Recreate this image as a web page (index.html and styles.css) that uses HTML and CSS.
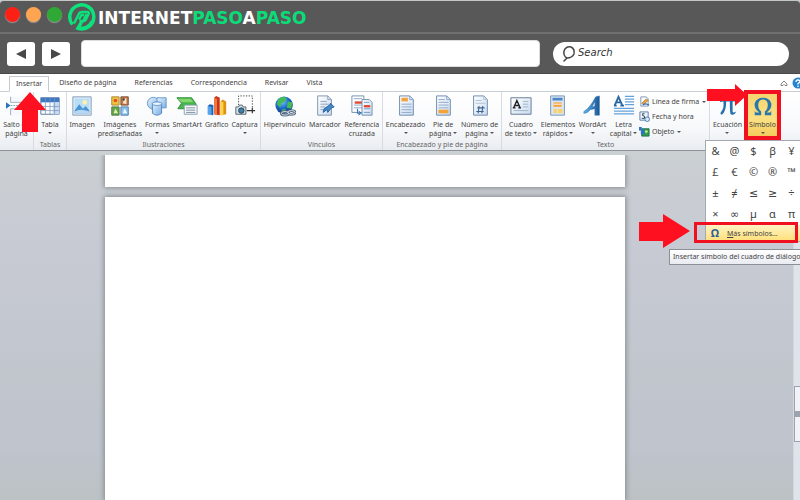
FILE: index.html
```html
<!DOCTYPE html>
<html lang="es">
<head>
<meta charset="utf-8">
<title>Insertar símbolo</title>
<link rel="stylesheet" href="styles.css">
</head>
<body>
<svg class="defs" width="0" height="0" aria-hidden="true">
  <defs>
    <linearGradient id="blue" x1="0" y1="0" x2="1" y2="1"><stop offset="0" stop-color="#e8f3fd"/><stop offset="1" stop-color="#79aee4"/></linearGradient>
    <linearGradient id="deep" x1="0" y1="0" x2="1" y2="0"><stop offset="0" stop-color="#5fb4ea"/><stop offset="1" stop-color="#1b5796"/></linearGradient>
    <linearGradient id="sheet" x1="0" y1="0" x2="1" y2="1"><stop offset="0" stop-color="#ffffff"/><stop offset="1" stop-color="#c9dcf2"/></linearGradient>
    <radialGradient id="globe" cx=".4" cy=".3" r=".7"><stop offset="0" stop-color="#7ec8ff"/><stop offset=".5" stop-color="#1f6fd0"/><stop offset="1" stop-color="#0b3580"/></radialGradient>
  </defs>
</svg>

<header class="browser">
  <div class="titlebar">
    <span class="dot red"></span><span class="dot orange"></span><span class="dot green"></span>
    <svg class="logo" viewBox="0 0 28 28" aria-hidden="true">
      <path d="M4.500 21.500A12 12 0 1 1 10 25.300L13.500 19" fill="none" stroke="#0be27c" stroke-width="3.500"/>
      <path d="M6 20.500L11 10.500Q12 9 14 9H19.500Q21.500 9 20.600 11L18 16.500Q17.300 18 15.500 18H11.500M14.500 19.500L18.500 11M11 16.500L13.500 12H16" fill="none" stroke="#0be27c" stroke-width="2.400"/>
      <path d="M12 24.500Q20 25.500 23.500 18" fill="none" stroke="#0be27c" stroke-width="2"/>
    </svg>
    <span class="brand">INTERNET<span>PASO</span>A<span>PASO</span></span>
  </div>
  <div class="navbar">
    <button class="nav" aria-label="Atrás"><svg viewBox="0 0 12 12"><path d="M11 1V11L1 6Z" fill="#484848"/></svg></button>
    <button class="nav" aria-label="Adelante"><svg viewBox="0 0 12 12"><path d="M1 1V11L11 6Z" fill="#484848"/></svg></button>
    <input class="address" type="text" aria-label="Dirección">
    <label class="search">
      <svg viewBox="0 0 16 18"><path d="M6 13Q2 11 3 6Q5 1 10 2Q14 4 13 9Q11 13 6 13L3 16" fill="none" stroke="#444" stroke-width="1.500" stroke-linecap="round"/></svg>
      <input type="text" placeholder="Search" aria-label="Search">
    </label>
  </div>
</header>

<nav class="tabs">
  <button class="tab active">Insertar
    <svg class="arrow up" viewBox="0 0 32 40"><path d="M16 0L32 18H24V40H8V18H0Z"/></svg>
  </button>
  <button class="tab">Diseño de página</button>
  <button class="tab">Referencias</button>
  <button class="tab">Correspondencia</button>
  <button class="tab">Revisar</button>
  <button class="tab">Vista</button>
  <span class="tools">
    <svg viewBox="0 0 8 8"><path d="M1 5L4 2L7 5V6.500H5L4 5.500L3 6.500H1Z" fill="#fff" stroke="#666" stroke-width=".8"/></svg>
    <svg class="help" viewBox="0 0 12 12"><circle cx="6" cy="6" r="5.500" fill="#2583cf"/><path d="M4 5Q4 3 6 3Q8 3 8 4.600Q8 5.500 6 6.500V7.500M6 8.500V10" fill="none" stroke="#fff" stroke-width="1.300"/></svg>
  </span>
</nav>

<section class="ribbon">
  <div class="group pages">
    <div class="items">
      <button class="cmd"><svg viewBox="0 0 24 24"><path d="M5 2V8H23V2M5 22V15H23V22" fill="#f5f8fc" stroke="#9aaabd"/><path d="M5 11.500H23" stroke="#7b98ba" stroke-dasharray="2 1"/><path d="M0 8L5 11.500L0 15Z" fill="#2675be"/></svg><span>Salto de<br>página</span></button>
    </div>
    <h2></h2>
  </div>
  <div class="group tables">
    <div class="items">
      <button class="cmd"><svg viewBox="0 0 24 24"><path d="M2 3H22V21H2Z" fill="#fff" stroke="#55749c"/><path d="M2 3H22V8H2Z" fill="#3f78c4"/><path d="M15 8H22V21H15Z" fill="#c7dbf3"/><path d="M2 12.500H22M2 17H22M7 3V21M12 3V21M17 3V21" stroke="#7896bb" stroke-width=".8"/></svg><span>Tabla<i class="drop"></i></span></button>
    </div>
    <h2>Tablas</h2>
  </div>
  <div class="group pictures">
    <div class="items">
      <button class="cmd"><svg viewBox="0 0 24 24"><path d="M2 2H22V22H2Z" fill="#dcebf8" stroke="#8199b4"/><path d="M4 4H20V20H4Z" fill="#b9ddf7"/><circle cx="15" cy="8" r="2.500" fill="#fff2a8"/><path d="M4 17L9 10L13 15L16 12L20 17V20H4Z" fill="#4c94d4"/><path d="M4 18Q10 14 20 18V20H4Z" fill="#b6d7ef"/></svg><span>Imagen</span></button>
      <button class="cmd"><svg viewBox="0 0 24 24"><path d="M3 2H11V11H3Z" fill="#f3c33b" stroke="#a48432"/><circle cx="7" cy="6" r="2" fill="#e14d28"/><path d="M13 2H21V11H13Z" fill="#cd7745" stroke="#73472e"/><path d="M15 9L16 5L19 3L19 10Z" fill="#f2e4c5"/><circle cx="16" cy="5" r="1.200" fill="#244"/><path d="M3 13H11V22H3Z" fill="#67a64d" stroke="#467744"/><path d="M5 20L7 15L10 20Z" fill="#e1f0ae"/><path d="M13 13H21V22H13Z" fill="#91c4ed" stroke="#4479aa"/><path d="M15 20L17 15L20 20Z" fill="#edf8ff"/></svg><span>Imágenes<br>prediseñadas</span></button>
      <button class="cmd"><svg viewBox="0 0 24 24"><circle cx="8" cy="9" r="6.500" fill="url(#blue)" stroke="#6798ca"/><path d="M12 3H22V14H12Z" fill="url(#blue)" stroke="#6798ca"/><path d="M7 9Q12 6 17 9V20Q12 24 7 20Z" fill="url(#blue)" stroke="#4e84bf"/><ellipse cx="12" cy="9.500" rx="5" ry="2" fill="#e8f5ff" stroke="#6798ca"/></svg><span>Formas<i class="drop"></i></span></button>
      <button class="cmd"><svg viewBox="0 0 24 24"><path d="M1 3H17L22 10L20 15H2L6 9Z" fill="#45b649" stroke="#278d37"/><path d="M2 4H16L19 8H6Z" fill="#86d66f"/><path d="M9 11H23V21H9Z" fill="#f5f9fc" stroke="#849bae"/><path d="M11 14H21M11 16.500H21M11 19H21" stroke="#789"/></svg><span>SmartArt</span></button>
      <button class="cmd"><svg viewBox="0 0 24 24"><path d="M2 12L4 10L8 11V22L2 21Z" fill="#1b64bc"/><path d="M2 12L6 13V22L2 21Z" fill="#56a5e8"/><path d="M9 3L11 1L15 3V22L9 21Z" fill="#c6351b"/><path d="M9 3L12 4V22L9 21Z" fill="#f37938"/><path d="M16 7L18 5L22 7V21L16 22Z" fill="#dd9212"/><path d="M16 7L19 8V22H16Z" fill="#ffd33e"/></svg><span>Gráfico</span></button>
      <button class="cmd"><svg viewBox="0 0 24 24"><path d="M5 11V1H20V14" fill="none" stroke="#444" stroke-dasharray="1.500 1.500"/><path d="M2 13H5L6 11H9L10 13H13V21H2Z" fill="#d8e2e9" stroke="#52606b"/><circle cx="8" cy="17" r="3" fill="#417fa7" stroke="#233e54"/><path d="M14 17H23M20 14V20" stroke="#333" stroke-width="1.300"/></svg><span>Captura<i class="drop"></i></span></button>
    </div>
    <h2>Ilustraciones</h2>
  </div>
  <div class="group links">
    <div class="items">
      <button class="cmd"><svg viewBox="0 0 24 24"><circle cx="11" cy="11" r="9.500" fill="url(#globe)"/><path d="M5 4Q11 0 14 4L11 8L8 9L7 14L3 10ZM15 7L20 8L19 15L14 14ZM8 16L13 15L11 20Z" fill="#45bb58"/><g fill="none" stroke="#52677d" stroke-width="3"><ellipse cx="12" cy="20" rx="4" ry="2"/><ellipse cx="19" cy="19" rx="4" ry="2"/></g><g fill="none" stroke="#dce7ef" stroke-width="1"><ellipse cx="12" cy="20" rx="4" ry="2"/><ellipse cx="19" cy="19" rx="4" ry="2"/></g></svg><span>Hipervínculo</span></button>
      <button class="cmd"><svg viewBox="0 0 24 24"><path d="M4 1H15L19 5V22H4Z" fill="url(#sheet)" stroke="#7c91a9"/><path d="M15 1V5H19M7 7H14M7 10H16M7 13H12M7 16H12" fill="none" stroke="#8c9db2"/><path d="M11 15L17 11L18 9L22 13L19 14L15 19L14 16L10 19Z" fill="#4189cb" stroke="#255c98"/></svg><span>Marcador</span></button>
      <button class="cmd"><svg viewBox="0 0 24 24"><path d="M1 1H14V19H1Z" fill="#fff" stroke="#6f8bab"/><path d="M3 4H12M3 11H12M3 14H12" stroke="#87a4c8"/><path d="M4 7H12V9.500H4Z" fill="#de4631"/><path d="M12 5H20L23 8V22H12Z" fill="url(#sheet)" stroke="#6f8bab"/><path d="M14 8H20M14 15H21M14 19H21" stroke="#6f99cc"/><path d="M14 11H21V13.500H14Z" fill="#de4631"/><path d="M7 15V20H10M8 17L11 20L8 22" fill="none" stroke="#1c65ae"/></svg><span>Referencia<br>cruzada</span></button>
    </div>
    <h2>Vínculos</h2>
  </div>
  <div class="group headers">
    <div class="items">
      <button class="cmd"><svg viewBox="0 0 24 24"><path d="M5 1H16L20 5V22H5Z" fill="url(#sheet)" stroke="#6885a7"/><path d="M7 3H14V7H7Z" fill="#f3a33c"/><path d="M16 1V5H20M7 10H18M7 13H18M7 16H18M7 19H18" fill="none" stroke="#8aa5c5"/></svg><span>Encabezado<i class="drop"></i></span></button>
      <button class="cmd"><svg viewBox="0 0 24 24"><path d="M5 1H16L20 5V22H5Z" fill="url(#sheet)" stroke="#6885a7"/><path d="M7 16H18V20H7Z" fill="#f3a33c"/><path d="M16 1V5H20M7 5H14M7 8H18M7 11H18M7 14H18" fill="none" stroke="#8aa5c5"/></svg><span>Pie de<br>página <i class="tick"></i></span></button>
      <button class="cmd"><svg viewBox="0 0 24 24"><path d="M5 1H16L20 5V22H5Z" fill="url(#sheet)" stroke="#6885a7"/><path d="M16 1V5H20M7 6H14M7 9H18" fill="none" stroke="#adbed3"/><path d="M11 12L10 20M15 12L14 20M9 14H17M8 18H16" stroke="#3e648e" stroke-width="1.200"/></svg><span>Número de<br>página <i class="tick"></i></span></button>
    </div>
    <h2>Encabezado y pie de página</h2>
  </div>
  <div class="group text">
    <div class="items">
      <button class="cmd"><svg viewBox="0 0 24 24"><path d="M1 3H23V21H1Z" fill="url(#sheet)" stroke="#60758e"/><path d="M4 14L7.500 6L11 14M5 11.500H10M3 14H6M9 14H12" fill="none" stroke="#222" stroke-width="1.500"/><path d="M14 7H20M14 10H20M14 13H20M4 17H20" stroke="#9eb0c5"/></svg><span>Cuadro<br>de texto <i class="tick"></i></span></button>
      <button class="cmd"><svg viewBox="0 0 24 24"><path d="M4 1H19V22H4Z" fill="#d9e7f6" stroke="#7590b0"/><path d="M6 3H17V6H6Z" fill="#4b87c4"/><path d="M7 8H16V13H7Z" fill="#f4a440"/><path d="M7 15H11V20H7ZM12 15H17V20H12Z" fill="#fad16f"/><path d="M7 10H16" stroke="#fff"/></svg><span>Elementos<br>rápidos <i class="tick"></i></span></button>
      <button class="cmd"><svg viewBox="0 0 24 24"><path d="M2 18Q8 15 15 2L19 1V22H14V15L9 16Q6 20 2 20ZM11 13L14 12V7Z" fill="url(#deep)" fill-rule="evenodd" stroke="#286faa" stroke-width=".5"/></svg><span>WordArt<i class="drop"></i></span></button>
      <button class="cmd"><svg viewBox="0 0 24 24"><path d="M2 11L6 2L10 11M3 8H9M1 11.500H4M8 11.500H12" fill="none" stroke="#2868a5" stroke-width="2"/><path d="M13 1.500H23M13 4.500H23M13 7.500H23M13 10.500H23M1 14.500H23M1 17.500H23M1 20.500H23" stroke="#65a2d9" stroke-width="1.300"/></svg><span>Letra<br>capital <i class="tick"></i></span></button>
      <div class="small-list">
        <button><svg viewBox="0 0 12 12"><path d="M2 1H8L10 3V11H2Z" fill="#fff" stroke="#7890ae"/><path d="M3 8L8 3L10 5L5 9Z" fill="#e7a430" stroke="#985d23" stroke-width=".6"/><path d="M4 10Q7 7 11 10" fill="none" stroke="#2a64ac" stroke-width="1.300"/></svg>Línea de firma <i class="tick"></i></button>
        <button><svg viewBox="0 0 12 12"><path d="M1 1H10V10H1Z" fill="#edf4fc" stroke="#567ba6"/><path d="M6 3H4V5Q7 5 6 8H3" fill="none" stroke="#234"/><circle cx="9" cy="9" r="2.500" fill="#d9ecfa" stroke="#4779af"/></svg>Fecha y hora</button>
        <button><svg viewBox="0 0 12 12"><path d="M3 3H11V11H3Z" fill="#329d4d" stroke="#1c6d54"/><path d="M0 1H3V5L6 3V9H2V5H0Z" fill="#2f73c4"/><circle cx="8" cy="6" r="1.500" fill="#c9ed75"/></svg>Objeto <i class="tick"></i></button>
      </div>
    </div>
    <h2>Texto</h2>
  </div>
  <div class="group symbols">
    <div class="items">
      <button class="cmd"><svg viewBox="0 0 24 24"><path d="M3 8Q4 4 8 4H21V7H17V18Q17 20 21 18Q19 23 15 21Q14 20 14 7H10Q10 17 6 21Q3 22 4 19Q8 15 7 7Q5 7 3 8Z" fill="#2270ae"/></svg><span>Ecuación<i class="drop"></i></span></button>
      <div class="anchor">
        <button class="cmd selected"><svg viewBox="0 0 24 24"><path d="M3 17L4 19H8Q2 15 3 9Q5 3 12 3Q19 3 21 9Q22 15 16 19H20L21 17V22H14V18Q18 15 17 9Q16 5 12 5Q8 5 7 9Q6 15 10 18V22H3Z" fill="#2779ad"/></svg><span>Símbolo<i class="drop"></i></span></button>
        <svg class="arrow right" viewBox="0 0 40 22"><path d="M0 5H28V0L40 11L28 22V17H0Z"/></svg>
        <div class="menu">
          <div class="glyphs">
            <button>&amp;</button><button>@</button><button>$</button><button>β</button><button>¥</button>
            <button>£</button><button>€</button><button>©</button><button>®</button><button>™</button>
            <button>±</button><button>≠</button><button>≤</button><button>≥</button><button>÷</button>
            <button>×</button><button>∞</button><button>µ</button><button>α</button><button>π</button>
          </div>
          <button class="more"><b>Ω</b><span><u>M</u>ás símbolos...</span></button>
          <span class="frame"></span>
          <svg class="arrow large" viewBox="0 0 51 34"><path d="M0 8H24V0L51 17L24 34V27H0Z"/></svg>
          <div class="tip" role="tooltip">Insertar símbolo del cuadro de diálogo</div>
        </div>
      </div>
    </div>
  </div>
</section>

<main class="workspace">
  <div class="canvas">
    <div class="sheet previous"></div>
    <div class="sheet current"></div>
  </div>
  <div class="scrollbar"><div class="thumb"></div></div>
</main>
</body>
</html>
```
FILE: styles.css
```css
* { box-sizing: border-box; }
body {
  margin: 0;
  height: 100vh;
  display: flex;
  flex-direction: column;
  overflow: hidden;
  background: #c8cdd2;
  color: #444;
  font: 7px/9px "Noto Sans", "Open Sans", sans-serif;
}
button {
  margin: 0;
  padding: 0;
  border: 0;
  background: none;
  color: inherit;
  font: inherit;
}
.defs { position: absolute; }

.browser {
  flex: none;
  background: #585858;
  border-top: 1px solid #c3c8c7;
  border-radius: 4px 4px 0 0;
}
.titlebar {
  display: flex;
  align-items: center;
  height: 33px;
  padding-left: 5px;
  border-bottom: 2px solid #707070;
}
.dot {
  width: 15px;
  height: 15px;
  margin: 0 6px 4px 0;
  border-radius: 50%;
  box-shadow: 0 1px 1px #999;
}
.red { background: #ff2015; }
.orange { background: #ffa552; }
.green { background: #2fa836; }
.logo { width: 28px; height: 28px; }
.brand {
  margin: 2px 0 0 2px;
  color: #fff;
  font: bold 17px/20px "DejaVu Sans", sans-serif;
}
.brand span { color: #0bdc78; }
.navbar {
  display: flex;
  align-items: center;
  height: 40px;
  padding: 0 11px 0 7px;
  border-bottom: 1px solid #484848;
}
.nav {
  width: 28px;
  height: 24px;
  margin-right: 7px;
  border-radius: 3px;
  background: #fff;
}
.nav svg { display: block; width: 12px; height: 12px; margin: auto; }
.address {
  flex: 1;
  min-width: 0;
  height: 27px;
  margin: 0 13px 0 4px;
  border: 1px solid #ddd;
  border-radius: 4px;
  background: #fff;
}
.search {
  display: flex;
  align-items: center;
  width: 236px;
  height: 24px;
  padding-left: 8px;
  border-radius: 12px;
  background: #fff;
}
.search svg { width: 16px; height: 18px; }
.search input {
  flex: 1;
  min-width: 0;
  padding: 0 0 2px 1px;
  border: 0;
  background: none;
  font: italic 10px/14px "DejaVu Sans", sans-serif;
}
.search input::placeholder { color: #333; opacity: 1; }

.tabs {
  flex: none;
  display: flex;
  align-items: flex-end;
  gap: 2px;
  height: 18px;
  padding-left: 9px;
  border-bottom: 1px solid #c9ced4;
  background: #fff;
}
.tab { position: relative; height: 16px; padding: 0 8px 2px; white-space: nowrap; }
.active {
  margin-bottom: -1px;
  padding: 0 6px 2px;
  border: 1px solid #c5cad0;
  border-bottom-color: #fff;
  background: #fff;
}
.tools { display: flex; align-items: center; gap: 4px; height: 16px; margin: 0 -4px 0 auto; }
.tools svg { width: 8px; height: 8px; }
.tools .help { width: 12px; height: 12px; }

.arrow { position: absolute; z-index: 5; fill: #ff1020; pointer-events: none; }
.up { top: 15px; left: 4px; width: 32px; height: 40px; }
.right { top: -10px; left: -37px; width: 40px; height: 22px; }
.large { top: 73px; left: -67px; width: 51px; height: 34px; }

.ribbon {
  flex: none;
  display: flex;
  height: 59px;
  border-bottom: 1px solid #8d9299;
  background: linear-gradient(#fff, #f8f9fb 60%, #e9edf1);
}
.group {
  flex: none;
  display: flex;
  flex-direction: column;
  border-right: 1px solid #d8dce1;
}
.group h2 {
  margin: auto 0 1px;
  color: #666;
  font: inherit;
  text-align: center;
  white-space: nowrap;
}
.items { display: flex; padding: 2px 1px 0; }
.cmd {
  display: flex;
  flex-direction: column;
  align-items: center;
  flex: 1 1 auto;
  height: 45px;
  text-align: center;
  white-space: nowrap;
}
.cmd > svg { flex: none; width: 22px; height: 22px; margin: 1px 0 3px; }
.cmd > span { display: flex; flex-direction: column; align-items: center; }
.cmd > span:has(br) { display: block; }
.drop, .tick {
  display: inline-block;
  border: 2px solid transparent;
  border-top-color: #555;
  border-bottom: 0;
}
.drop { margin-top: 3px; }
.tick { margin-bottom: 2px; }
.pages { width: 34px; }
.tables { width: 33px; }
.pictures { width: 194px; }
.links { width: 122px; }
.headers { width: 119px; }
.text { width: 208px; }
.symbols { flex: 1; border: 0; }
.symbols .cmd { flex: none; width: 33px; }
.small-list { width: 69px; }
.small-list button {
  display: flex;
  align-items: center;
  height: 15px;
  white-space: nowrap;
}
.small-list svg { width: 11px; height: 11px; margin-right: 2px; }
.small-list .tick { margin: 0 0 0 3px; }

.anchor { position: relative; }
.symbols .selected {
  width: 37px;
  height: 50px;
  margin-top: -4px;
  border: 4px solid #f01020;
  background: linear-gradient(#f6d571, #fbe083 60%, #f3cc5b);
}
.menu {
  position: absolute;
  z-index: 4;
  top: 46px;
  left: -39px;
  width: 104px;
  border: 1px solid #a4a9b0;
  background: #fff;
}
.glyphs {
  display: grid;
  grid-template-columns: repeat(5, 19px);
  grid-auto-rows: 21px;
  font: 11px/19px "Noto Sans", "DejaVu Sans", sans-serif;
}
.glyphs button { padding-bottom: 2px; }
.more {
  display: flex;
  align-items: center;
  width: 100%;
  height: 16px;
  background: linear-gradient(#fff3c4, #ffe078);
}
.more b { width: 18px; color: #285f99; font-size: 11px; line-height: 14px; text-align: center; }
.more span { padding-left: 3px; }
.frame {
  position: absolute;
  z-index: 5;
  top: 81px;
  left: -12px;
  width: 104px;
  height: 21px;
  border: 3px solid #f01020;
}
.tip {
  position: absolute;
  top: 108px;
  left: -37px;
  height: 16px;
  padding: 0 3px;
  border: 1px solid #8b8f96;
  background: linear-gradient(#fff, #e9ebf2);
  line-height: 14px;
  white-space: nowrap;
}

.workspace { flex: 1; min-height: 0; display: flex; }
.canvas {
  flex: 1;
  display: flex;
  flex-direction: column;
  gap: 10px;
  padding: 4px 168px 0 105px;
  background: linear-gradient(#cbd0d3, #c7cad3 28%, #c1c6cd 65%, #bfc4cd 85%, #bcc2c4);
}
.sheet { background: #fff; box-shadow: 0 0 5px 1px #858b8e; }
.previous { height: 32px; clip-path: inset(0 -8px -8px -8px); }
.current { flex: 1; }
.scrollbar { width: 7px; padding-top: 235px; border-left: 1px solid #d3d7de; background: #dfe3ea; }
.thumb {
  width: 12px;
  height: 56px;
  border: 1px solid #9ca3ae;
  background: linear-gradient(#f1f3f8 45%, #9ca3ae 45%, #9ca3ae 55%, #f1f3f8 55%);
}
```
